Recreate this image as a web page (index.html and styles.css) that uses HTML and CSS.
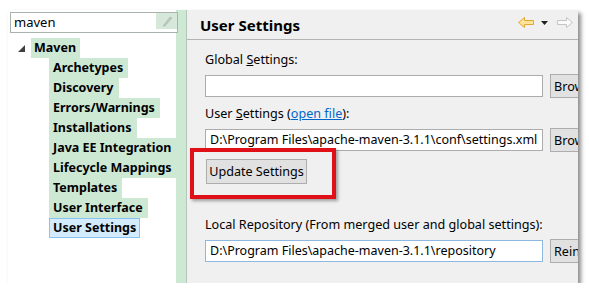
FILE: index.html
```html
<!DOCTYPE html>
<html lang="en">
<head>
    <meta charset="UTF-8">
    <title>User Settings</title>
    <link rel="stylesheet" href="styles.css">
</head>
<body>
    <div class="window">
        <div class="sidebar">
            <div class="sidebar-main">
                <div class="search">
                    <span class="search-text">maven</span>
                    <span class="search-clear">
                        <svg width="12" height="12" viewBox="0 0 12 12">
                            <polygon points="2,11 9,2 11,3 4,11" fill="#b8c8bc" stroke="#a9b9ad" stroke-width="0.6"/>
                        </svg>
                    </span>
                </div>
                <ul class="tree">
                    <li class="node root">
                        <svg class="twisty" width="7" height="7" viewBox="0 0 7 7"><polygon points="7,0 7,7 0,7" fill="#404040"/></svg>
                        <span class="label">Maven</span>
                    </li>
                    <li class="node child"><span class="label">Archetypes</span></li>
                    <li class="node child"><span class="label">Discovery</span></li>
                    <li class="node child"><span class="label">Errors/Warnings</span></li>
                    <li class="node child"><span class="label">Installations</span></li>
                    <li class="node child"><span class="label">Java EE Integration</span></li>
                    <li class="node child"><span class="label">Lifecycle Mappings</span></li>
                    <li class="node child"><span class="label">Templates</span></li>
                    <li class="node child"><span class="label">User Interface</span></li>
                    <li class="node child"><span class="label selected">User Settings</span></li>
                </ul>
            </div>
            <div class="sidebar-edge"></div>
        </div>

        <div class="page">
            <div class="page-header">
                <h2>User Settings</h2>
                <div class="nav">
                    <svg width="16" height="11" viewBox="0 0 16 11">
                        <path d="M0.5 5.5 L6.5 0.5 L6.5 3.5 L15.5 3.5 L15.5 7.5 L6.5 7.5 L6.5 10.5 Z" fill="#ffe39a" stroke="#e3a72f" stroke-linejoin="round"/>
                    </svg>
                    <svg class="nav-drop" width="7" height="4" viewBox="0 0 7 4"><polygon points="0,0 7,0 3.5,4" fill="#202020"/></svg>
                    <svg width="16" height="11" viewBox="0 0 16 11">
                        <path d="M15.5 5.5 L9.5 0.5 L9.5 3.5 L0.5 3.5 L0.5 7.5 L9.5 7.5 L9.5 10.5 Z" fill="#fafafa" stroke="#c4c4c4" stroke-linejoin="round"/>
                    </svg>
                </div>
            </div>

            <div class="page-body">
                <div class="field-label first">Global <u>S</u>ettings:</div>
                <div class="field-row">
                    <div class="input"></div>
                    <button class="btn">Browse...</button>
                </div>

                <div class="field-label">User <u>S</u>ettings (<a href="#">open file</a>):</div>
                <div class="field-row">
                    <div class="input">D:\Program Files\apache-maven-3.1.1\conf\settings.xml</div>
                    <button class="btn">Browse...</button>
                </div>

                <button class="btn update">Update Settings</button>

                <div class="field-label spaced">Local Repository (From merged user and global settings):</div>
                <div class="field-row">
                    <div class="input focused">D:\Program Files\apache-maven-3.1.1\repository</div>
                    <button class="btn">Reindex</button>
                </div>
            </div>
        </div>

        <div class="callout"></div>
    </div>
</body>
</html>
```

FILE: styles.css
```css
body {
    margin: 0;
    background-color: #fff;
    font-family: "Noto Sans", "Open Sans", sans-serif;
    font-size: 12px;
    color: #000;
}
.window {
    position: relative;
    display: flex;
    width: 570px;
    height: 273px;
    margin: 10px 0 0 8px;
    background-color: #fff;
    overflow: hidden;
    box-shadow: 3px 3px 4px rgba(0,0,0,0.45);
}

/* left tree */
.sidebar {
    display: flex;
    width: 178px;
    flex-shrink: 0;
}
.sidebar-main {
    width: 168px;
}
.sidebar-edge {
    width: 10px;
    background-color: #cde8d3;
}
.search {
    display: flex;
    align-items: flex-start;
    justify-content: space-between;
    box-sizing: border-box;
    width: 168px;
    height: 21px;
    margin: 2px 0 0 2px;
    border: 1px solid #a9b3ac;
    background-color: #fff;
    position: relative;
    z-index: 1;
}
.search-text {
    padding-left: 3px;
    line-height: 18px;
    font-size: 13px;
}
.search-clear {
    display: flex;
    align-items: center;
    justify-content: center;
    width: 21px;
    height: 16px;
    background-color: #d5e8d9;
}
.tree {
    list-style: none;
    margin: 5px 0 0;
    padding: 0;
}
.node {
    display: flex;
    align-items: center;
    height: 20px;
    font-weight: bold;
    font-size: 12.5px;
}
.root {
    padding-left: 10px;
}
.child {
    padding-left: 41px;
}
.twisty {
    margin-right: 6px;
}
.label {
    display: inline-block;
    height: 20px;
    line-height: 20px;
    padding: 0 4px 0 3px;
    background-color: #cde8d3;
    white-space: nowrap;
}
.child .label {
    padding: 0 5px 0 4px;
}
.child .label.selected {
    box-sizing: border-box;
    line-height: 18px;
    padding: 0 3px;
    border: 1px solid #86c3f0;
    background-color: #d4ebfc;
}

/* right page */
.page {
    flex: 1;
    min-width: 0;
    border-left: 1px solid #b3c6b7;
    background-color: #f0f0f0;
}
.page-header {
    display: flex;
    align-items: center;
    justify-content: space-between;
    height: 29px;
    padding: 0 5px 0 13px;
    border-bottom: 1px solid #b4b4b4;
}
.page-header h2 {
    margin: 0;
    font-size: 15px;
    font-weight: bold;
}
.nav {
    display: flex;
    align-items: center;
    gap: 7px;
    margin-top: -4px;
}
.nav-drop {
    margin-right: 2px;
}
.page-body {
    padding: 12px 0 0 18px;
}
.field-label {
    height: 16px;
    line-height: 16px;
    margin-top: 8px;
    margin-bottom: 6px;
    font-size: 12.6px;
    white-space: nowrap;
}
.field-label.first {
    margin-top: 0;
}
.field-label.spaced {
    margin-top: 33px;
}
.field-label a {
    color: #0066cc;
}
.field-row {
    display: flex;
    align-items: center;
    gap: 7px;
    height: 24px;
}
.input {
    box-sizing: border-box;
    width: 338px;
    height: 22px;
    flex-shrink: 0;
    padding-left: 4px;
    line-height: 20px;
    border: 1px solid #acacac;
    background-color: #fff;
    font-size: 12.5px;
    white-space: nowrap;
}
.input.focused {
    border-color: #8fb8e0;
}
.btn {
    box-sizing: border-box;
    flex-shrink: 0;
    width: 80px;
    height: 24px;
    padding: 0 3px;
    text-align: left;
    border: 1px solid #adadad;
    background-color: #e1e1e1;
    font-family: inherit;
    font-size: 12.6px;
    color: #000;
}
.btn.update {
    display: block;
    width: 101px;
    height: 25px;
    margin: 7px 0 0 1px;
    text-align: center;
    padding: 0;
}

/* red annotation box */
.callout {
    position: absolute;
    left: 182px;
    top: 138px;
    width: 146px;
    height: 51px;
    box-sizing: border-box;
    border: 4px solid #e01019;
    box-shadow: 2px 2px 3px rgba(0,0,0,0.35);
}
```
